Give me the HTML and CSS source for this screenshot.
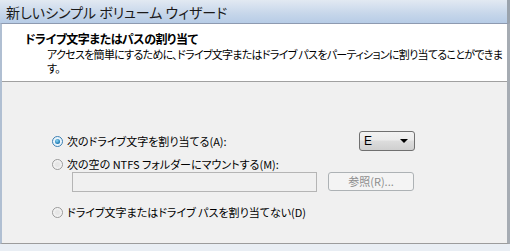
FILE: index.html
```
<!DOCTYPE html>
<html lang="ja">
<head>
    <meta charset="UTF-8">
    <title>新しいシンプル ボリューム ウィザード</title>
    <link rel="stylesheet" href="styles.css">
</head>
<body>
    <div class="window">
        <div class="titlebar">新しいシンプル ボリューム ウィザード</div>

        <div class="frame">
            <div class="header">
                <h1>ドライブ文字またはパスの割り当て</h1>
                <p>アクセスを簡単にするために、ドライブ文字またはドライブ パスをパーティションに割り当てることができます。</p>
            </div>

            <div class="content">
                <div class="row first">
                    <label class="opt">
                        <span class="radio checked"></span>
                        次のドライブ文字を割り当てる(A):
                    </label>
                    <div class="combo">
                        <span>E</span>
                        <span class="arrow"></span>
                    </div>
                </div>

                <div class="row">
                    <label class="opt">
                        <span class="radio"></span>
                        次の空の NTFS フォルダーにマウントする(M):
                    </label>
                </div>

                <div class="row path">
                    <div class="path-input"></div>
                    <div class="btn disabled">参照(R)...</div>
                </div>

                <div class="row">
                    <label class="opt">
                        <span class="radio"></span>
                        ドライブ文字またはドライブ パスを割り当てない(D)
                    </label>
                </div>
            </div>
        </div>
    </div>
</body>
</html>
```

FILE: styles.css
```
html, body {
    margin: 0;
    padding: 0;
    background: #ffffff;
}

body {
    font-family: "Noto Sans CJK JP", "Liberation Sans", sans-serif;
    font-feature-settings: "palt";
    color: #000;
}

.window {
    width: 510px;
    height: 251px;
    overflow: hidden;
    background: #e9eef4;
}

.titlebar {
    height: 23px;
    box-sizing: border-box;
    padding: 2px 0 0 6px;
    font-size: 14px;
    line-height: 20px;
    color: #1a1a1a;
    background: linear-gradient(#e2e9f2, #c6d6ea 60%, #b7cce6);
    border-right: 3px solid #9aa3ad;
}

.frame {
    height: 221px;
    border-left: 2px solid #b0bfd2;
    border-right: 3px solid #a6acb3;
    border-bottom: 1px solid #9c9c9c;
    border-top: 1px solid #8e9ab0;
    box-sizing: border-box;
    display: flex;
    flex-direction: column;
}

.header {
    background: #ffffff;
    height: 58px;
    box-sizing: border-box;
    padding: 7px 0 0 23px;
    border-bottom: 1px solid #a0a0a0;
}

.header h1 {
    margin: 0;
    font-size: 12px;
    font-weight: bold;
    line-height: 16px;
    letter-spacing: -0.5px;
}

.header p {
    margin: 0;
    padding-left: 22px;
    font-size: 11px;
    line-height: 14px;
    letter-spacing: -0.7px;
    width: 460px;
}

.content {
    flex: 1;
    background: #f0f0f0;
    padding: 49px 0 0 50px;
    font-size: 11px;
}

.row {
    display: flex;
    align-items: center;
}

.row.first {
    height: 20px;
    margin-bottom: 6px;
}

.opt {
    display: flex;
    align-items: center;
    gap: 4px;
    width: 307px;
    line-height: 14px;
}

.radio {
    width: 11px;
    height: 11px;
    border-radius: 50%;
    box-sizing: border-box;
    border: 1px solid #9a9a9a;
    background: radial-gradient(circle, #e6e6e6 30%, #f7f7f7 70%);
    position: relative;
}

.radio.checked {
    border-color: #3c7fb1;
    background: #eaf4fb;
}

.radio.checked::after {
    content: "";
    position: absolute;
    left: 2px;
    top: 2px;
    width: 5px;
    height: 5px;
    border-radius: 50%;
    background: radial-gradient(circle at 40% 35%, #8fd7f5, #1b77b0 70%, #0d4f80);
}

.combo {
    width: 56px;
    height: 20px;
    box-sizing: border-box;
    border: 1px solid #707070;
    border-radius: 3px;
    background: linear-gradient(#f2f2f2, #ebebeb 45%, #dddddd 50%, #cfcfcf);
    display: flex;
    align-items: center;
    justify-content: space-between;
    padding: 0 6px 0 4px;
    font-family: "Liberation Sans", sans-serif;
    font-size: 12px;
}

.arrow {
    width: 0;
    height: 0;
    border-left: 4px solid transparent;
    border-right: 4px solid transparent;
    border-top: 4px solid #000;
}

.row.path {
    padding-left: 20px;
    margin-top: 1px;
    gap: 11px;
    align-items: flex-start;
}

.path-input {
    width: 245px;
    height: 20px;
    box-sizing: border-box;
    border: 1px solid #b5b5b5;
    background: #f0f0f0;
}

.btn {
    width: 86px;
    height: 19px;
    box-sizing: border-box;
    border: 1px solid #adb2b5;
    border-radius: 3px;
    background: #f4f4f4;
    text-align: center;
    line-height: 17px;
    font-size: 11px;
}

.btn.disabled {
    color: #8d8d8d;
}

.row.path + .row {
    margin-top: 13px;
}
```
